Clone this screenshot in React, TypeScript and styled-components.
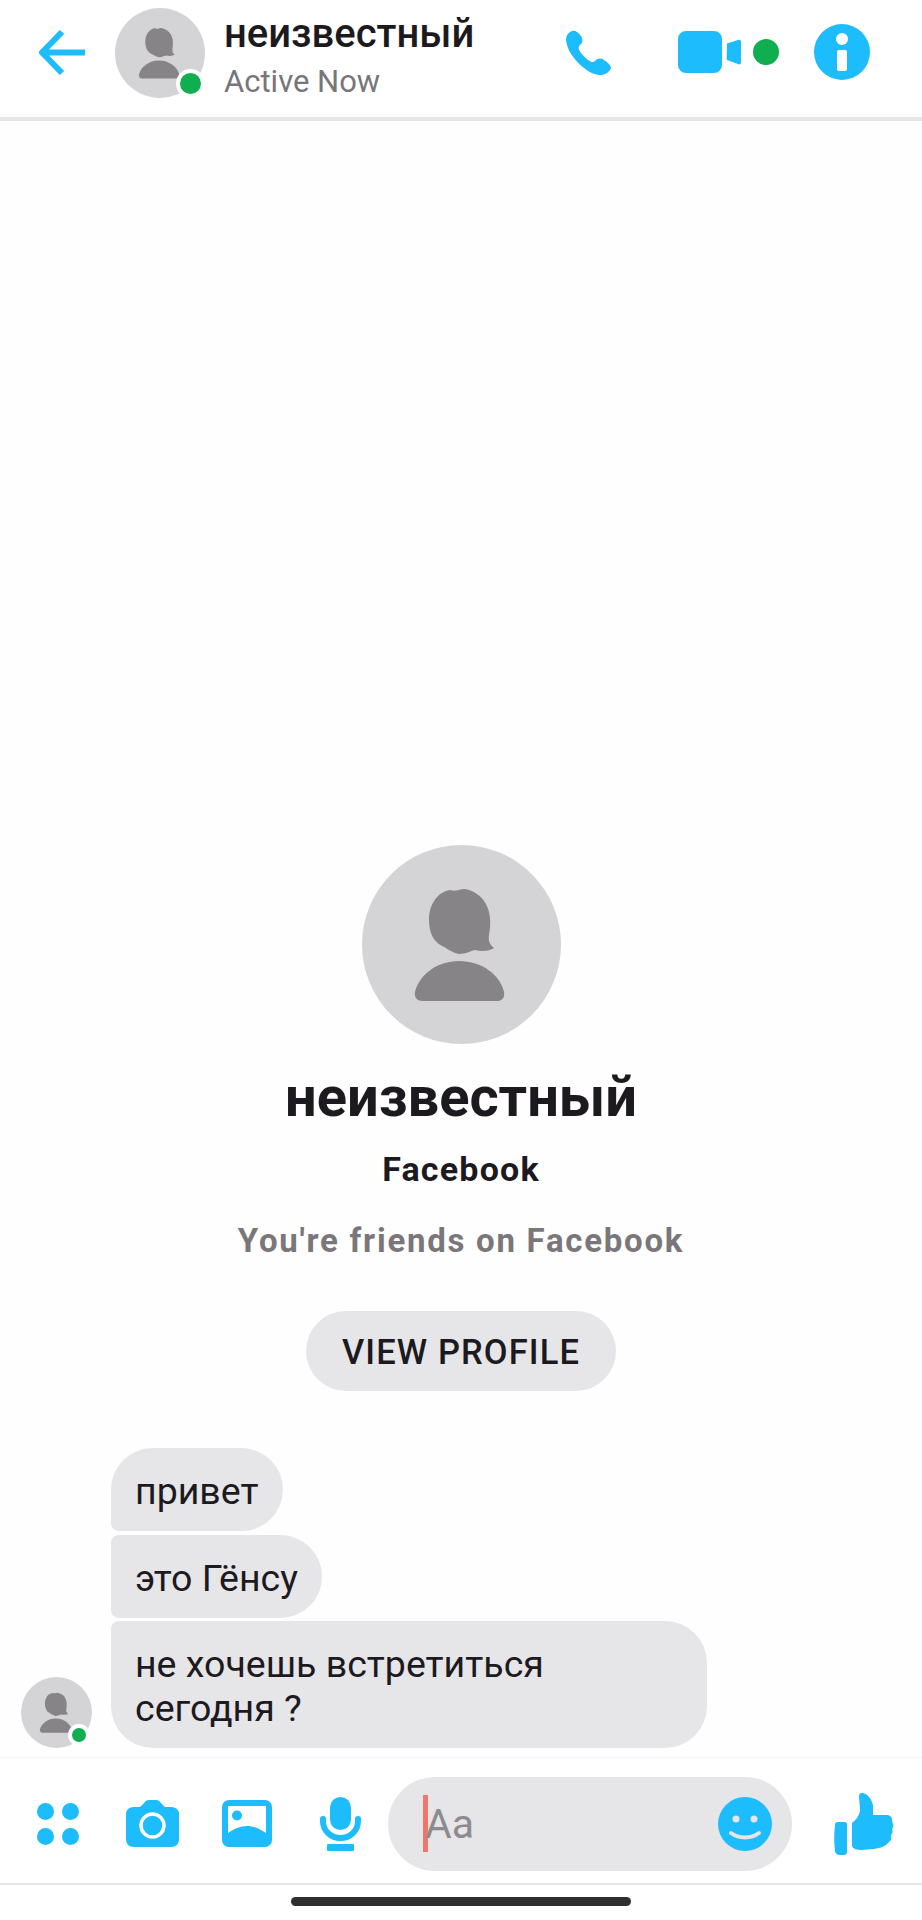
import React from "react";
import styled, { createGlobalStyle } from "styled-components";

const BLUE = "#1cbcfd";
const GREEN = "#0fae4f";

const GlobalStyle = createGlobalStyle`
    html, body {
        margin: 0;
        padding: 0;
        background: #fefefe;
    }
    * {
        box-sizing: border-box;
    }
`;

const Screen = styled.div`
    width: 922px;
    height: 1920px;
    display: flex;
    flex-direction: column;
    background: #fefefe;
    color: #1c1a1e;
    font-family: Roboto, "Liberation Sans", sans-serif;
    overflow: hidden;
`;

const Header = styled.header`
    height: 121px;
    flex: none;
    display: flex;
    align-items: flex-start;
    padding: 8px 52px 0 38px;
    background: #fff;
    border-bottom: 4px solid #e6e5e8;
`;

const BackIcon = styled.svg`
    width: 47px;
    height: 45px;
    margin-top: 22px;
    flex: none;
`;

const AvatarCircle = styled.div<{ $size: number }>`
    position: relative;
    flex: none;
    width: ${(p) => p.$size}px;
    height: ${(p) => p.$size}px;
    border-radius: 50%;
    background: #d4d3d6;
`;

const AvatarSvg = styled.svg`
    display: block;
    width: 100%;
    height: 100%;
`;

const OnlineBadge = styled.span<{ $size: number; $inset: number }>`
    position: absolute;
    right: ${(p) => p.$inset}px;
    bottom: ${(p) => p.$inset}px;
    width: ${(p) => p.$size}px;
    height: ${(p) => p.$size}px;
    border-radius: 50%;
    background: ${GREEN};
    border: 4px solid #fff;
`;

const HeaderAvatar = styled.div`
    margin-left: 30px;
`;

const TitleBlock = styled.div`
    margin-left: 19px;
    display: flex;
    flex-direction: column;
`;

const HeaderName = styled.div`
    font-size: 40px;
    font-weight: 500;
    line-height: 46px;
    margin-top: 3px;
`;

const ActiveNow = styled.div`
    font-size: 31px;
    line-height: 36px;
    margin-top: 7px;
    color: #77757a;
`;

const HeaderActions = styled.div`
    margin-left: auto;
    margin-top: 22px;
    height: 44px;
    display: flex;
    align-items: center;
`;

const PhoneIcon = styled.svg`
    width: 45px;
    height: 45px;
`;

const VideoIcon = styled.svg`
    width: 63px;
    height: 42px;
    margin-left: 67px;
`;

const CallDot = styled.span`
    width: 26px;
    height: 26px;
    margin-left: 12px;
    border-radius: 50%;
    background: ${GREEN};
`;

const InfoIcon = styled.svg`
    width: 56px;
    height: 56px;
    margin-left: 35px;
`;

const Chat = styled.main`
    flex: 1;
    min-height: 0;
    display: flex;
    flex-direction: column;
    justify-content: flex-end;
    padding-bottom: 9px;
`;

const Intro = styled.section`
    display: flex;
    flex-direction: column;
    align-items: center;
    margin-bottom: 57px;
`;

const IntroName = styled.h1`
    margin: 19px 0 0;
    font-size: 56px;
    font-weight: 700;
    line-height: 68px;
`;

const IntroSource = styled.div`
    margin-top: 14px;
    font-size: 34px;
    font-weight: 700;
    line-height: 48px;
    letter-spacing: 1.2px;
`;

const IntroFriends = styled.div`
    margin-top: 24px;
    font-size: 33px;
    font-weight: 700;
    line-height: 48px;
    letter-spacing: 1.73px;
    color: #7a767a;
`;

const ProfileButton = styled.button`
    margin-top: 46px;
    padding-top: 2px;
    width: 310px;
    height: 80px;
    border: 0;
    border-radius: 40px;
    background: #e6e5e8;
    color: #1c1a1e;
    font-family: inherit;
    font-size: 34.5px;
    font-weight: 500;
    letter-spacing: 1.1px;
`;

const MessageRow = styled.div`
    display: flex;
    align-items: flex-end;
    gap: 19px;
    padding-left: 21px;
`;

const MessageStack = styled.div`
    display: flex;
    flex-direction: column;
    align-items: flex-start;
    gap: 3.5px;
`;

const Bubble = styled.div<{ $position: "first" | "middle" | "last" }>`
    max-width: 596px;
    width: ${(p) => (p.$position === "last" ? "596px" : "auto")};
    padding: 21px 24px 18px;
    font-size: 37.5px;
    line-height: 44px;
    background: #e6e5e8;
    border-radius: ${(p) =>
        p.$position === "first"
            ? "42px 42px 42px 8px"
            : p.$position === "middle"
              ? "8px 42px 42px 8px"
              : "8px 42px 42px 42px"};
`;

const Composer = styled.footer`
    height: 128px;
    flex: none;
    display: flex;
    align-items: center;
    padding: 6px 0 0 37px;
    background: #fff;
    border-top: 1px solid #f6f5f7;
    border-bottom: 2px solid #e6e5e8;
`;

const ToolIcon = styled.svg<{ $w: number; $h: number; $gap: number }>`
    flex: none;
    width: ${(p) => p.$w}px;
    height: ${(p) => p.$h}px;
    margin-left: ${(p) => p.$gap}px;
`;

const InputPill = styled.div`
    width: 404px;
    height: 94px;
    margin-left: 27px;
    padding: 0 20px 0 35px;
    flex: none;
    display: flex;
    align-items: center;
    border-radius: 47px;
    background: #e6e5e8;
`;

const Caret = styled.span`
    width: 5px;
    height: 57px;
    flex: none;
    background: #f0756b;
`;

const Placeholder = styled.span`
    margin-left: -3px;
    font-size: 41px;
    color: #8c8b8e;
`;

const SmileIcon = styled.svg`
    width: 54px;
    height: 54px;
    margin-left: auto;
`;

const HomeArea = styled.div`
    height: 35px;
    flex: none;
    display: flex;
    justify-content: center;
    padding-top: 12px;
    background: #fff;
`;

const HomeBar = styled.div`
    width: 340px;
    height: 9px;
    border-radius: 5px;
    background: #2f2e31;
`;

const PersonArt = () => (
    <AvatarSvg viewBox="0 0 199 199">
        <path
            fill="#868487"
            d="M88 45C75 47 67 60 67 75C67 88 72 97 80 101C85 103 88 107 97 109C104 109 108 106 113 105C120 107 128 106 132 103C128 100 126 96 127 90C131 70 126 49 103 44C98 44 94 47 88 45Z"
        />
        <path
            fill="#868487"
            d="M97 116C75 116 57 130 53 147C52 152 55 156 60 156H136C140 156 143 152 142 147C138 130 120 116 97 116Z"
        />
    </AvatarSvg>
);

const App = () => {
    return (
        <Screen>
            <GlobalStyle />
            <Header>
                <BackIcon viewBox="0 0 47 45" fill="none">
                    <path
                        d="M47 22.5H5M24 2L4 22.5L24 43"
                        stroke={BLUE}
                        strokeWidth="6"
                        strokeLinejoin="round"
                    />
                </BackIcon>
                <HeaderAvatar>
                    <AvatarCircle $size={90}>
                        <PersonArt />
                        <OnlineBadge $size={29} $inset={0} />
                    </AvatarCircle>
                </HeaderAvatar>
                <TitleBlock>
                    <HeaderName>неизвестный</HeaderName>
                    <ActiveNow>Active Now</ActiveNow>
                </TitleBlock>
                <HeaderActions>
                    <PhoneIcon viewBox="0 0 45 45">
                        <path
                            fill={BLUE}
                            d="M6 1C3 2 0 5 0 10C1 20 8 30 18 38C24 43 30 45 35 45C40 45 44 41 45 38C45 35 42 33 38 30C35 28 32 28 29 31C27 33 25 32 22 30C18 27 15 23 13 20C12 17 13 16 15 14C17 12 17 9 15 6C12 2 9 0 6 1Z"
                        />
                    </PhoneIcon>
                    <VideoIcon viewBox="0 0 63 42">
                        <rect width="44" height="42" rx="8" fill={BLUE} />
                        <path
                            fill={BLUE}
                            d="M49 12.5L60 9C62 8.5 63 9.5 63 11V31C63 33 62 34 60 33L49 29C48.5 28.8 49 13 49 12.5Z"
                        />
                    </VideoIcon>
                    <CallDot />
                    <InfoIcon viewBox="0 0 56 56">
                        <circle cx="28" cy="28" r="28" fill={BLUE} />
                        <circle cx="28" cy="15" r="6" fill="#fff" />
                        <rect x="23" y="26" width="10" height="21" rx="2" fill="#fff" />
                    </InfoIcon>
                </HeaderActions>
            </Header>
            <Chat>
                <Intro>
                    <AvatarCircle $size={199}>
                        <PersonArt />
                    </AvatarCircle>
                    <IntroName>неизвестный</IntroName>
                    <IntroSource>Facebook</IntroSource>
                    <IntroFriends>You're friends on Facebook</IntroFriends>
                    <ProfileButton>VIEW PROFILE</ProfileButton>
                </Intro>
                <MessageRow>
                    <AvatarCircle $size={71}>
                        <PersonArt />
                        <OnlineBadge $size={22} $inset={2} />
                    </AvatarCircle>
                    <MessageStack>
                        <Bubble $position="first">привет</Bubble>
                        <Bubble $position="middle">это Гёнсу</Bubble>
                        <Bubble $position="last">
                            не хочешь встретиться сегодня ?
                        </Bubble>
                    </MessageStack>
                </MessageRow>
            </Chat>
            <Composer>
                <ToolIcon $w={42} $h={42} $gap={0} viewBox="0 0 42 42">
                    <circle cx="8.5" cy="8.5" r="8.5" fill={BLUE} />
                    <circle cx="33.5" cy="8.5" r="8.5" fill={BLUE} />
                    <circle cx="8.5" cy="33.5" r="8.5" fill={BLUE} />
                    <circle cx="33.5" cy="33.5" r="8.5" fill={BLUE} />
                </ToolIcon>
                <ToolIcon $w={53} $h={47} $gap={47} viewBox="0 0 53 47">
                    <path
                        fill={BLUE}
                        d="M8 7H13C15 7 16 5 18 3C19 1 21 0 23 0H30C32 0 34 1 35 3C37 5 38 7 40 7H45C50 7 53 10 53 14V39C53 44 50 47 45 47H8C3 47 0 44 0 39V14C0 10 3 7 8 7Z"
                    />
                    <circle cx="26.5" cy="25.5" r="11.5" fill={BLUE} stroke="#fff" strokeWidth="3.5" />
                </ToolIcon>
                <ToolIcon $w={50} $h={47} $gap={43} viewBox="0 0 50 47">
                    <rect width="50" height="47" rx="7" fill={BLUE} />
                    <path
                        fill="#fff"
                        d="M7 6H43C44 6 44 6.5 44 7V33C38 29 32 26 25 26C18 26 12 29 6 33V7C6 6.5 6.5 6 7 6Z"
                    />
                    <circle cx="15" cy="15.5" r="5" fill={BLUE} />
                </ToolIcon>
                <ToolIcon $w={41} $h={54} $gap={48} viewBox="0 0 41 54">
                    <rect x="10" y="0" width="21" height="33" rx="10.5" fill={BLUE} />
                    <path
                        d="M3 22V24C3 34 11 41 20.5 41C30 41 38 34 38 24V22"
                        fill="none"
                        stroke={BLUE}
                        strokeWidth="6"
                        strokeLinecap="round"
                    />
                    <rect x="7" y="47" width="27" height="7" rx="1" fill={BLUE} />
                </ToolIcon>
                <InputPill>
                    <Caret />
                    <Placeholder>Aa</Placeholder>
                    <SmileIcon viewBox="0 0 54 54">
                        <circle cx="27" cy="27" r="27" fill={BLUE} />
                        <circle cx="18" cy="22" r="3.5" fill="#e6e5e8" />
                        <circle cx="36" cy="22" r="3.5" fill="#e6e5e8" />
                        <path
                            d="M13 36C21 42 33 42 41 36"
                            fill="none"
                            stroke="#e6e5e8"
                            strokeWidth="4"
                            strokeLinecap="round"
                        />
                    </SmileIcon>
                </InputPill>
                <ToolIcon $w={60} $h={62} $gap={42} viewBox="0 0 60 62">
                    <path
                        fill={BLUE}
                        d="M4 29H11C12 29 13 30 13 31V59C13 60.5 12 62 10 62H6C3 62 1 60 1 58C0 50 0 40 1 32C1 30 2 29 4 29Z"
                    />
                    <path
                        fill={BLUE}
                        d="M28 0C32 0 37 4 39 12V22H52C56 22 58 24 58 27C58 29 59 30 59 31C60 33 59 35 58 36C59 38 59 40 57 42C58 45 57 48 54 50C50 55 42 56 28 57C23 57 19 56 18 53V30C22 27 25 23 26 18C26 12 25 6 25 3C25 1 26 0 28 0Z"
                    />
                </ToolIcon>
            </Composer>
            <HomeArea>
                <HomeBar />
            </HomeArea>
        </Screen>
    );
};

export default App;
